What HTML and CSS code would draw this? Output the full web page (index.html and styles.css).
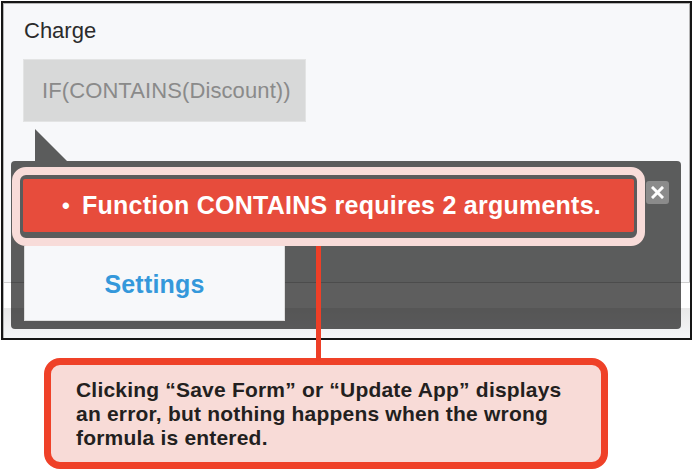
FILE: index.html
```html
<!DOCTYPE html>
<html lang="en">
<head>
<meta charset="utf-8">
<title>Formula error</title>
<link rel="stylesheet" href="styles.css">
</head>
<body>
<div class="page">
  <div class="frame">
    <div class="field-label">Charge</div>
    <div class="formula-input">IF(CONTAINS(Discount))</div>
    <div class="bottom-bar">
      <div class="bottom-white"></div>
      <div class="bottom-gray"></div>
    </div>
    <div class="pointer"></div>
    <div class="overlay">
      <div class="error-row">
        <div class="highlight">
          <div class="error-box"><span class="bullet">•</span>Function CONTAINS requires 2 arguments.</div>
        </div>
        <div class="close-btn">
          <svg width="13" height="13" viewBox="0 0 13 13"><path d="M2 2 L11 11 M11 2 L2 11" stroke="#fff" stroke-width="3" stroke-linecap="square"/></svg>
        </div>
      </div>
      <div class="settings-panel">Settings</div>
    </div>
  </div>
  <div class="connector"></div>
  <div class="callout"><p class="callout-text">Clicking “Save Form” or “Update App” displays an error, but nothing happens when the wrong formula is entered.</p></div>
</div>
</body>
</html>
```

FILE: styles.css
```css
html, body {
  margin: 0;
  padding: 0;
  background: #fff;
}
.page {
  position: relative;
  width: 694px;
  height: 470px;
  padding-top: 1px;
  box-sizing: border-box;
  font-family: "Liberation Sans", Arial, sans-serif;
}
.frame {
  position: relative;
  margin-left: 1px;
  width: 691px;
  height: 339px;
  box-sizing: border-box;
  border: 2px solid #161616;
  box-shadow: inset 0 0 0 1px #b5b5b5;
  background: #f7f8fa;
  display: flex;
  flex-direction: column;
  padding: 1px 0 0 1px;
}
.field-label {
  margin: 14px 0 0 20px;
  font-size: 22px;
  line-height: 26px;
  color: #2b2b2b;
}
.formula-input {
  margin: 15px 0 0 19px;
  width: 283px;
  height: 63px;
  box-sizing: border-box;
  background: #d8d9d9;
  border: 1px solid #e3e4e4;
  color: #8a8a8a;
  font-size: 22px;
  letter-spacing: 0.1px;
  display: flex;
  align-items: center;
  padding-left: 18px;
}
.bottom-bar {
  margin-top: auto;
  border-top: 1px solid #cfcfcf;
  display: flex;
  flex-direction: column;
}
.bottom-white {
  height: 25px;
  background: #fff;
}
.bottom-gray {
  height: 30px;
  background: linear-gradient(#e8e8e8, #f5f6f8);
}
.pointer {
  position: absolute;
  left: 32px;
  top: 126px;
  width: 32px;
  height: 32px;
  background: rgba(0, 0, 0, 0.63);
  clip-path: polygon(0 0, 0 100%, 100% 100%);
}
.overlay {
  position: absolute;
  left: 8px;
  top: 158px;
  width: 670px;
  height: 168px;
  box-sizing: border-box;
  background: rgba(0, 0, 0, 0.63);
  border-radius: 4px;
  padding: 6px 0 0 1px;
  display: flex;
  flex-direction: column;
}
.error-row {
  display: flex;
  align-items: flex-start;
  position: relative;
  z-index: 2;
}
.highlight {
  width: 633px;
  height: 79px;
  box-sizing: border-box;
  border: 8px solid #f8dcd9;
  border-radius: 14px;
  padding: 4px 3px 6px 3px;
}
.error-box {
  height: 100%;
  box-sizing: border-box;
  background: #e74c3c;
  border-radius: 2px;
  color: #fff;
  font-weight: bold;
  font-size: 25px;
  letter-spacing: 0.25px;
  display: flex;
  align-items: center;
  justify-content: center;
  padding-left: 6px;
}
.bullet {
  font-size: 22px;
  margin-right: 12px;
}
.close-btn {
  margin: 14px 0 0 1px;
  width: 23px;
  height: 23px;
  background: #8b8b8b;
  border-radius: 3px;
  display: flex;
  align-items: center;
  justify-content: center;
  filter: blur(0.3px);
}
.settings-panel {
  margin: 0 0 0 12px;
  width: 261px;
  height: 75px;
  box-sizing: border-box;
  background: #f7f8fa;
  border: 1px solid #dedede;
  border-top: none;
  color: #3498db;
  font-weight: bold;
  font-size: 25px;
  letter-spacing: 0.2px;
  display: flex;
  align-items: center;
  justify-content: center;
  padding-top: 2px;
}
.connector {
  position: absolute;
  left: 316px;
  top: 245px;
  width: 5px;
  height: 116px;
  background: #ee3f27;
}
.callout {
  margin: 18px 0 0 44px;
  width: 564px;
  height: 111px;
  box-sizing: border-box;
  border: 7px solid #ef4128;
  border-radius: 16px;
  background: #f8dbd7;
  padding: 13px 20px 0 25px;
}
.callout-text {
  margin: 0;
  width: 500px;
  font-family: "Liberation Sans", Arial, sans-serif;
  font-weight: bold;
  font-size: 21px;
  letter-spacing: 0.2px;
  line-height: 24px;
  color: #231f20;
}
```
